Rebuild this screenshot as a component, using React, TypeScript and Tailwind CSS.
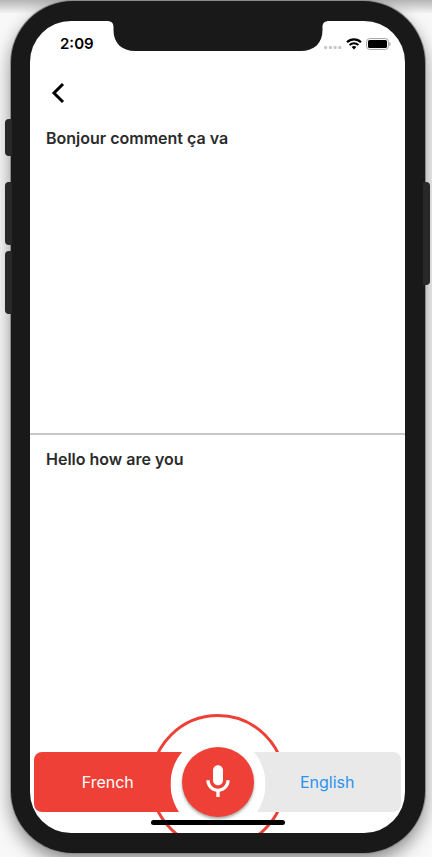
import React from "react";

function Notch() {
  return (
    <svg
      className="absolute top-0 left-1/2 -translate-x-1/2"
      width="223"
      height="30"
      viewBox="0 0 223 30"
      fill="#191919"
      aria-hidden="true"
    >
      <path d="M0 0h223c-5 0-7 2-7 6v3c0 13-8 21-22 21H29C15 30 7 22 7 9V6C7 2 5 0 0 0z" />
    </svg>
  );
}

function StatusBar() {
  return (
    <div className="relative flex h-11 items-center justify-between pt-px pr-[14px] pl-[30px] text-black">
      <span className="text-[15px] leading-5 font-semibold">2:09</span>
      <Notch />
      <div className="flex items-center gap-1">
        <svg width="18" height="12" viewBox="0 0 18 12" fill="#c8c8c8" aria-hidden="true">
          <rect x="0" y="8" width="3.200" height="3" rx="1" />
          <rect x="4.800" y="8" width="3.200" height="3" rx="1" />
          <rect x="9.500" y="8" width="3.200" height="3" rx="1" />
          <rect x="14.200" y="8" width="3.200" height="3" rx="1" />
        </svg>
        <svg width="16" height="12" viewBox="0 0 16 12" aria-hidden="true">
          <path d="M1 4.300a10 10 0 0 1 14 0" fill="none" stroke="#000" strokeWidth="2.200" />
          <path d="M3.600 7a6.300 6.300 0 0 1 8.800 0" fill="none" stroke="#000" strokeWidth="2" />
          <path d="M5.600 9.100a3.500 3.500 0 0 1 4.800 0L8 11.600z" />
        </svg>
        <svg width="25" height="12" viewBox="0 0 25 12" aria-hidden="true">
          <rect x="0.600" y="0.600" width="21.800" height="10.800" rx="3" fill="none" stroke="#a3a3a3" />
          <rect x="2" y="2" width="19" height="8" rx="1.600" />
          <path d="M23.400 4v4c.8-.3 1.300-1.100 1.300-2s-.5-1.700-1.300-2z" fill="#a3a3a3" />
        </svg>
      </div>
    </div>
  );
}

function LanguageBar() {
  return (
    <footer className="relative flex px-1 pb-[21px]">
      <div className="absolute -top-[38px] left-1/2 size-[136px] -translate-x-1/2 rounded-full border-3 border-[#ee4036]" />
      <button
        type="button"
        className="relative h-[60px] flex-1 rounded-l-lg bg-[#ee4036] pr-9 text-base text-white"
      >
        French
      </button>
      <button
        type="button"
        className="relative h-[60px] flex-1 rounded-r-lg bg-[#e9e9e9] pl-9 text-base text-[#2a93ee]"
      >
        English
      </button>
      <div className="absolute top-0 left-1/2 h-[60px] w-[95px] -translate-x-1/2 overflow-hidden">
        <div className="-mt-[17px] h-[98px] rounded-[50%] bg-white" />
      </div>
      <button
        type="button"
        aria-label="Record"
        className="absolute -top-[5px] left-1/2 flex h-[70px] w-[72px] -translate-x-1/2 items-center justify-center rounded-[50%] bg-[#ee4036] shadow-[0_2px_3px_rgba(0,0,0,0.35)]"
      >
        <svg width="40" height="40" viewBox="0 0 24 24" fill="#fff" aria-hidden="true">
          <path d="M12 14c1.660 0 3-1.340 3-3V5c0-1.660-1.340-3-3-3S9 3.340 9 5v6c0 1.660 1.340 3 3 3z" />
          <path d="M17 11c0 2.760-2.240 5-5 5s-5-2.240-5-5H5c0 3.530 2.610 6.430 6 6.920V21h2v-3.080c3.390-.49 6-3.390 6-6.920h-2z" />
        </svg>
      </button>
      <div className="absolute bottom-2 left-1/2 h-[5px] w-[134px] -translate-x-1/2 rounded-full bg-black" />
    </footer>
  );
}

const sideButton = "absolute w-[7px] bg-[#282828]";

export default function App() {
  return (
    <div className="flex min-h-screen flex-col overflow-hidden bg-[#f8f8f8] bg-[linear-gradient(#b5b5b5,#f8f8f8_14px)] pt-px pr-[7px] pb-1 pl-[11px] font-[Inter,'Liberation_Sans',sans-serif]">
      <div className="relative flex flex-1 flex-col rounded-[62px] bg-[#191919] py-5 pr-5 pl-[19px] shadow-[0_0_0_1px_#8b8b8b,0_8px_18px_rgba(0,0,0,0.45)]">
        <div className={`${sideButton} top-[118px] -left-[6px] h-[37px] rounded-l-sm`} />
        <div className={`${sideButton} top-[181px] -left-[6px] h-[63px] rounded-l-sm`} />
        <div className={`${sideButton} top-[250px] -left-[6px] h-[63px] rounded-l-sm`} />
        <div className={`${sideButton} top-[181px] -right-[5px] h-[103px] rounded-r-sm`} />
        <div className="flex flex-1 flex-col overflow-hidden rounded-[41px] bg-white">
          <StatusBar />
          <header className="flex h-[51px] items-start px-3 pt-3">
            <button type="button" aria-label="Back" className="flex size-8 items-center justify-center">
              <svg width="24" height="24" viewBox="0 0 24 24" fill="none" stroke="#000" strokeWidth="3" aria-hidden="true">
                <path d="M17 3L8 12l9 9" />
              </svg>
            </button>
          </header>
          <main className="grid flex-1 grid-rows-[1fr_auto_1fr] text-base leading-6 font-semibold text-[#2b2b2b]">
            <section className="px-4 pt-[10px]">
              <p>Bonjour comment ça va</p>
            </section>
            <hr className="border-t-2 border-[#c8c8c8]" />
            <section className="px-4 pt-3">
              <p>Hello how are you</p>
            </section>
          </main>
          <LanguageBar />
        </div>
      </div>
    </div>
  );
}
